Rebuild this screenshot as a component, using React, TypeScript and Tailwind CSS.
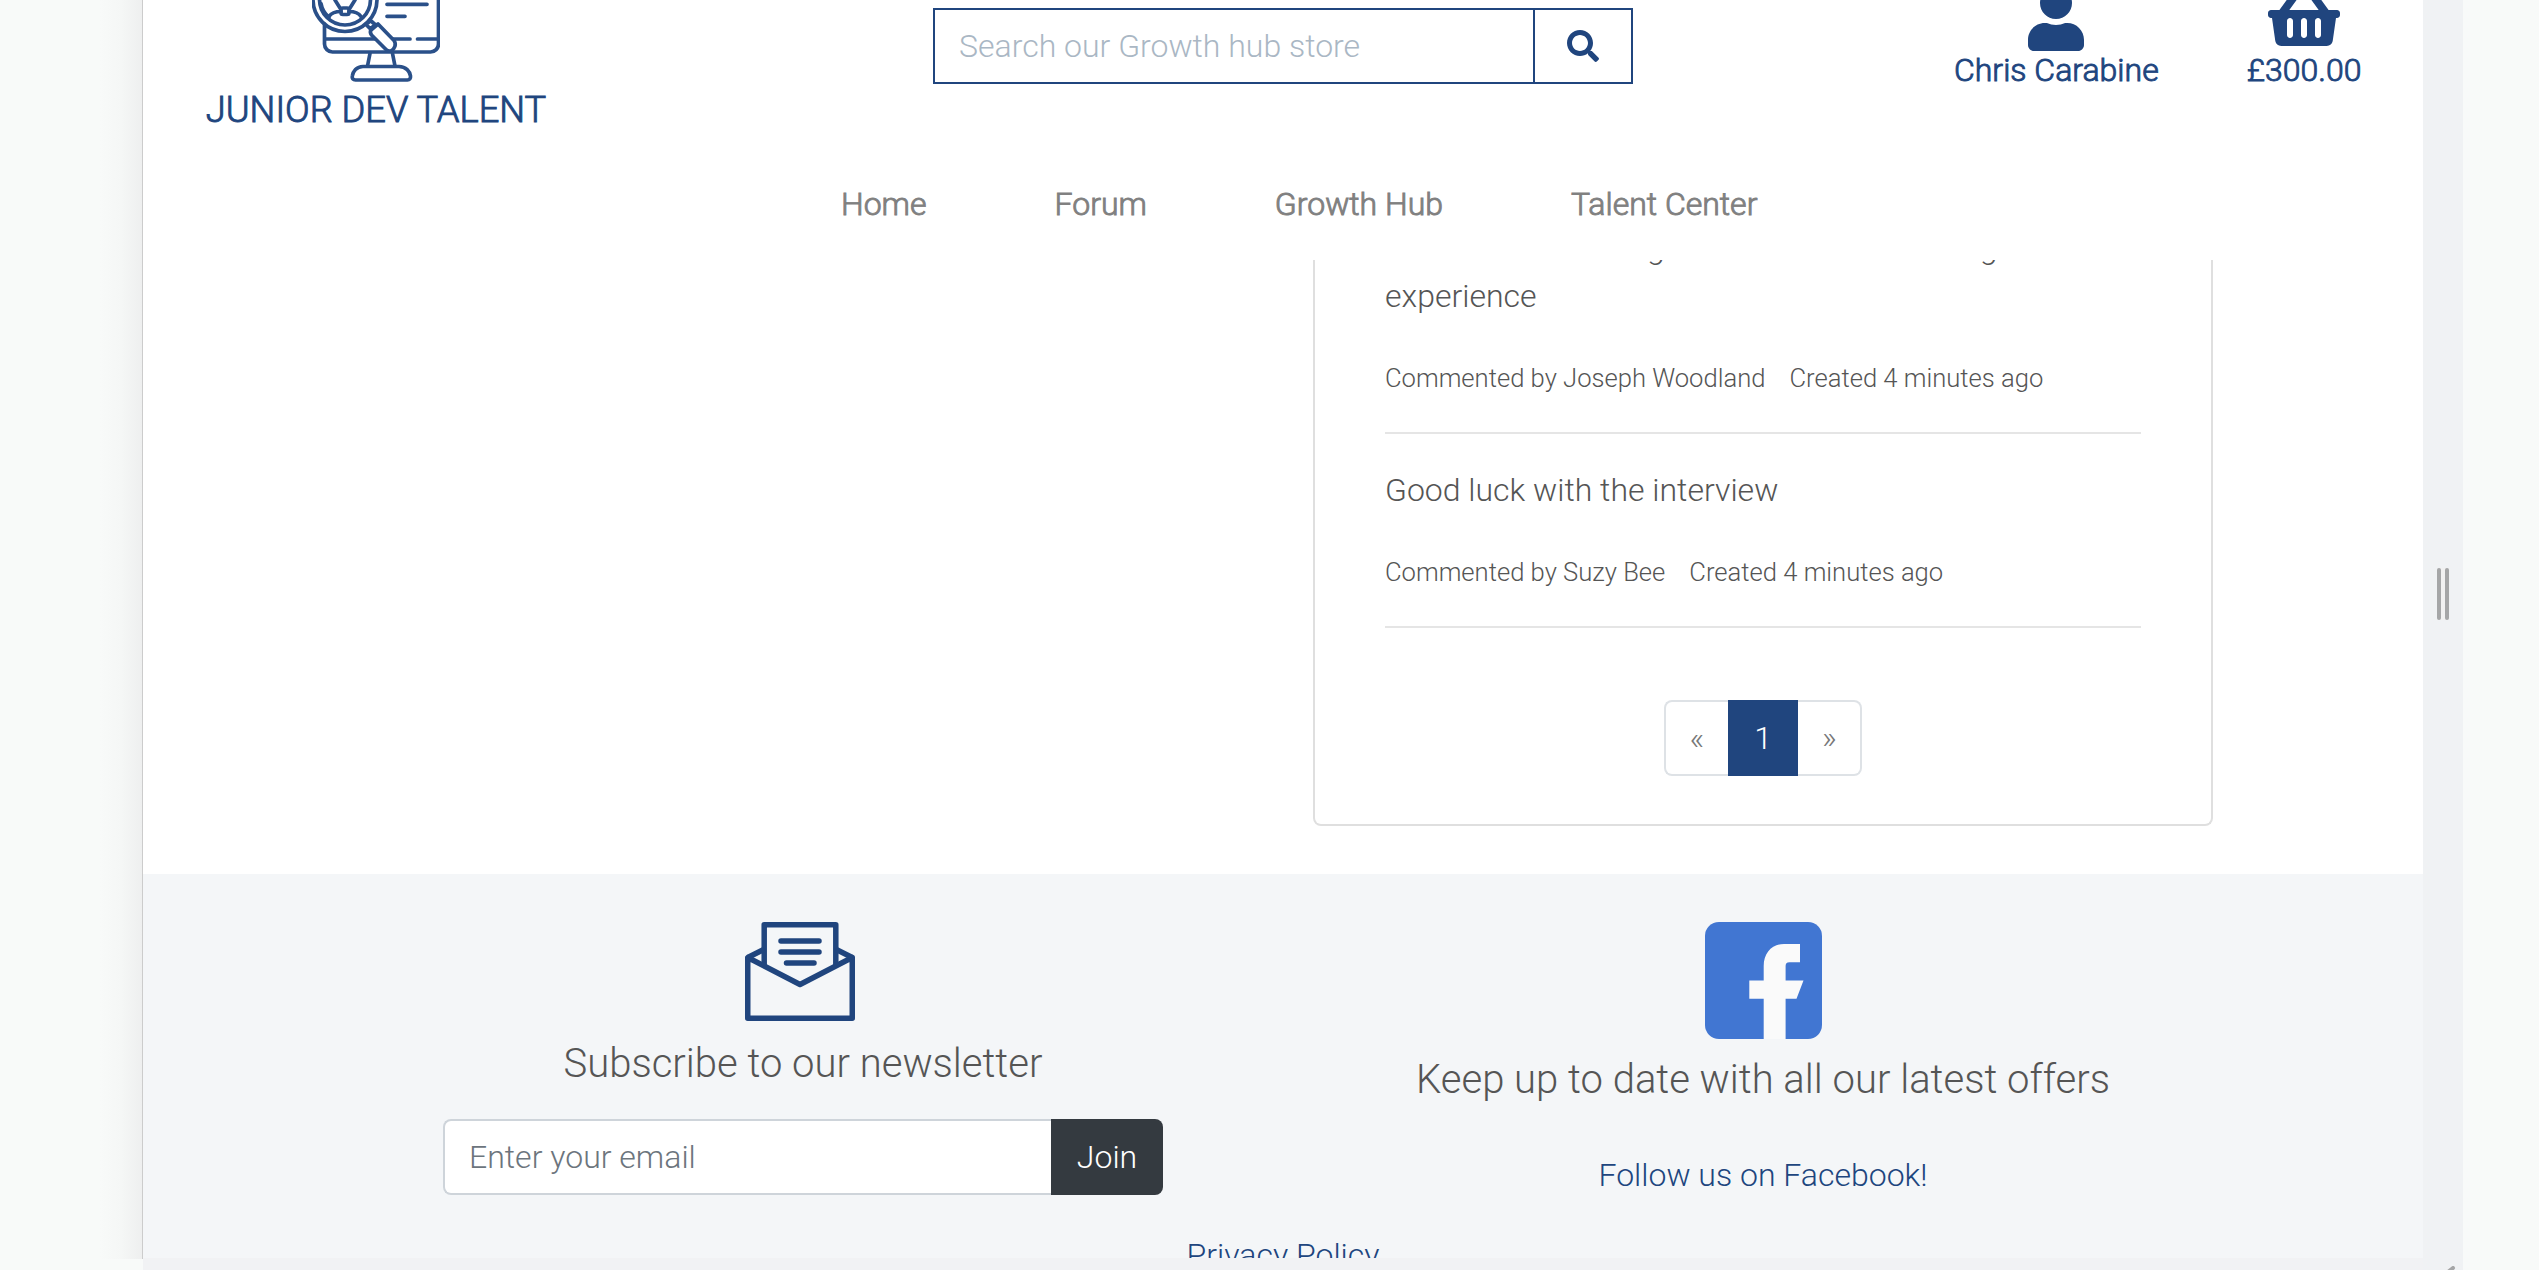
import { FaSearch, FaShoppingBasket, FaUser } from 'react-icons/fa';

const NAVY = '#20457e';

function Logo() {
  return (
    <svg viewBox="312 0 128 83" className="h-[83px] w-[128px] overflow-hidden" fill="none" stroke="#2a5089" strokeWidth="3.7" strokeLinecap="round" strokeLinejoin="round">
      <path d="M438.5 0V44a8 8 0 0 1-8 8H332.500a8 8 0 0 1-8-8V24" />
      <path d="M325 39H410M417.500 39H438M387 4.300H427M387 16.300H405" />
      <circle cx="345" cy="-0.500" r="32" />
      <circle cx="345" cy="-0.500" r="25.500" />
      <path d="M321 3.500C322 9 325 14 329 17" />
      <path d="M329 16.500C332 12 337 11.500 341 11.500M361 16.500C358 12 353 11.500 349 11.500" />
      <path d="M335 0L340 8M355 0L350 8" />
      <rect x="341" y="8" width="8" height="6.500" rx="2" />
      <path d="M366 24.500L370.500 20.500L375 24.500L370.500 29Z" />
      <path d="M371 30L378 24L394 40.500C396.500 44 395 49 391 51C389 51.500 387 50.500 386 49.500L371.500 35C370.500 33.500 370 31.500 371 30Z" fill="white" />
      <path d="M370 53.500L367.500 66M392.500 53.500L395 66" />
      <path d="M363 66.500H399C406 66.500 410 71.500 410.500 76C410.800 78.500 409.500 80 407.500 80H355.500C353 80 351.800 78.500 352.300 76C353 71.500 356.500 66.500 363 66.500Z" />
    </svg>
  );
}

function Envelope() {
  return (
    <svg viewBox="0 0 110 99" className="mr-1.5 h-[99px] w-[110px]" fill="none" stroke={NAVY} strokeWidth="5.500" strokeLinejoin="round">
      <path d="M2.750 35.500V96.250H107.250V35.500L55 62.500Z" />
      <path d="M19.200 43V2.750H90.800V43" />
      <path d="M19.200 27.300L2.750 35.500M90.800 27.300L107.250 35.500" />
      <path d="M36 19H74M36 30H74M41.500 41H69" strokeLinecap="round" />
    </svg>
  );
}

function FacebookLogo() {
  return (
    <svg viewBox="0 0 117 117" className="size-[117px]">
      <rect width="117" height="117" rx="14" fill="#4176d2" />
      <path d="M58.700 117V76.700H44.300V58.400H58.700V44C58.700 31 67 22 79 22H95V40.200H84.500C81.500 40.200 80.600 41.500 80.600 44V58.400H98.500L91.500 76.700H80.600V117Z" fill="#fafafa" />
    </svg>
  );
}

function Comment({ text, author }: { text: string; author: string }) {
  return (
    <>
      <p>{text}</p>
      <p className="my-8 h-12">
        <small className="mr-6 text-[25.6px]">Commented by {author}</small>
        <small className="text-[25.6px]">Created 4 minutes ago</small>
      </p>
      <hr className="border-t-2 border-[#e5e5e5]" />
    </>
  );
}

function Header() {
  return (
    <header className="h-[260px] shrink-0 overflow-hidden bg-white text-[#20457e]">
      <div className="flex h-[180px] items-start">
        <div className="flex w-[466px] flex-col items-center">
          <Logo />
          <div className="mt-1 text-[36.3px] leading-[46px] whitespace-nowrap [-webkit-text-stroke:0.9px]">JUNIOR DEV TALENT</div>
        </div>
        <form className="mt-2 ml-[324px] flex h-[76px] w-[700px] border-2 border-[#20457e]">
          <input className="min-w-0 flex-1 px-6 outline-none placeholder:text-[#aab7c4]" placeholder="Search our Growth hub store" />
          <button type="button" className="flex w-[98px] items-center justify-center border-l-2 border-[#20457e]" aria-label="Search">
            <FaSearch className="size-8" />
          </button>
        </form>
        <div className="ml-[321px] flex gap-[88px] [-webkit-text-stroke:0.9px]">
          <a className="flex flex-col items-center">
            <FaUser className="-mt-[13px] h-16 w-14" />
            <span className="-mt-[5px]">Chris Carabine</span>
          </a>
          <a className="flex flex-col items-center">
            <FaShoppingBasket className="-mt-[14px] h-16 w-[72px]" />
            <span className="-mt-1">£300.00</span>
          </a>
        </div>
      </div>
      <nav className="ml-[698px] flex gap-32 text-[#808080] [-webkit-text-stroke:0.9px]">
        <a>Home</a>
        <a>Forum</a>
        <a>Growth Hub</a>
        <a>Talent Center</a>
      </nav>
    </header>
  );
}

function CommentsCard() {
  return (
    <section className="h-[614px] shrink-0 overflow-hidden bg-white">
      <div className="ml-[1170px] flex h-[566px] w-[900px] flex-col rounded-b-lg border-x-2 border-b-2 border-[#dfdfdf] px-[70px]">
        <div className="-mt-9 ml-[262px] flex h-12 shrink-0 gap-[315px]">
          <span>g</span>
          <span>g</span>
        </div>
        <Comment text="experience" author="Joseph Woodland" />
        <div className="mt-8">
          <Comment text="Good luck with the interview" author="Suzy Bee" />
        </div>
        <div className="mt-[72px] flex h-[76px] justify-center text-[#777]">
          <a className="rounded-l-lg border-2 border-r-0 border-[#dee2e6] px-6 py-3">«</a>
          <a className="bg-[#20457e] px-[26px] py-[14px] text-white">1</a>
          <a className="rounded-r-lg border-2 border-l-0 border-[#dee2e6] px-6 py-3">»</a>
        </div>
      </div>
    </section>
  );
}

function Footer() {
  return (
    <footer className="flex h-96 shrink-0 flex-col items-center overflow-hidden bg-[#f4f6f8] text-center">
      <div className="flex h-[357px] shrink-0 pt-12">
        <div className="flex w-[960px] flex-col items-center">
          <Envelope />
          <h4 className="mt-[19px] text-[40px]">Subscribe to our newsletter</h4>
          <form className="mt-[31px] flex h-[76px] w-[720px]">
            <input className="min-w-0 flex-1 rounded-l-lg border-2 border-r-0 border-[#ced4da] bg-white px-6 outline-none placeholder:text-[#6c757d]" placeholder="Enter your email" />
            <button type="button" className="w-28 rounded-r-lg bg-[#343a40] text-white">Join</button>
          </form>
        </div>
        <div className="flex w-[960px] flex-col items-center">
          <FacebookLogo />
          <h4 className="mt-[17px] text-[40px]">Keep up to date with all our latest offers</h4>
          <a className="mt-[47px] text-[#20457e]">Follow us on Facebook!</a>
        </div>
      </div>
      <a className="text-[#20457e]">Privacy Policy</a>
    </footer>
  );
}

export default function App() {
  return (
    <div className="flex h-[1270px] w-[2539px] overflow-hidden bg-[#f8faf9] text-[32px] leading-[48px] font-light text-[#555] [font-family:Roboto,sans-serif]">
      <div className="ml-[100px] h-[1259px] w-[43px] border-r border-[#ccc] bg-linear-to-r from-[#f8faf9] via-[#f5f7f6] to-[#eeefef]" />
      <main className="flex w-[2280px] flex-col bg-[#f1f2f4]">
        <Header />
        <CommentsCard />
        <Footer />
      </main>
      <aside className="flex w-10 flex-col items-center bg-[#f0f2f4] pt-[568px]">
        <div className="flex h-[52px] w-3 justify-between bg-[#f1f1f1]">
          <span className="w-1 rounded-sm bg-[#a5a6a7]" />
          <span className="w-1 rounded-sm bg-[#a5a6a7]" />
        </div>
        <svg viewBox="0 0 10 4" className="mt-[646px] ml-[18px] h-1 w-2.5 shrink-0">
          <path d="M1 6L6 2" stroke="#a5a6a7" strokeWidth="4" strokeLinecap="round" />
        </svg>
      </aside>
    </div>
  );
}
